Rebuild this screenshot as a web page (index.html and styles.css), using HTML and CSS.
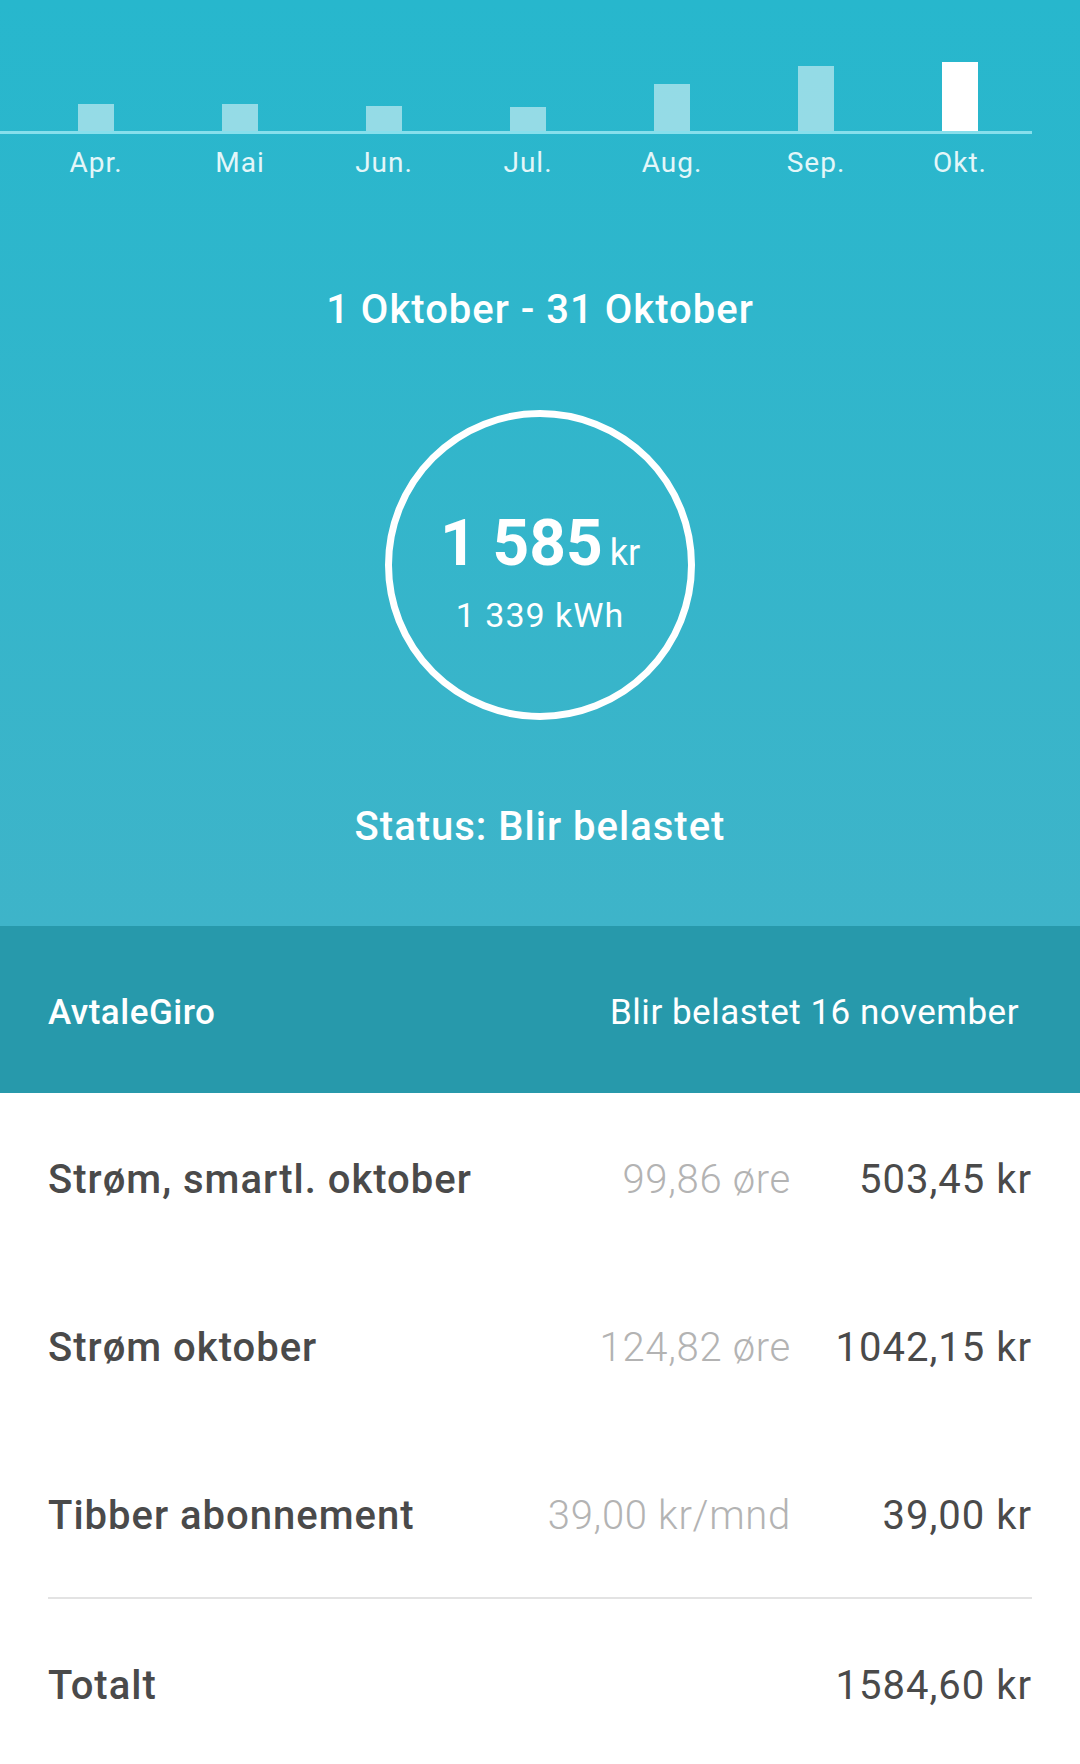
FILE: index.html
```html
<!DOCTYPE html>
<html lang="no">
<head>
    <meta charset="UTF-8">
    <meta name="viewport" content="width=device-width, initial-scale=1.0">
    <title>Faktura oktober</title>
    <link rel="stylesheet" href="styles.css">
</head>
<body>
    <div class="header">
        <div class="chart">
            <div class="month"><div class="bar" style="height: 27px"></div></div>
            <div class="month"><div class="bar" style="height: 27px"></div></div>
            <div class="month"><div class="bar" style="height: 25px"></div></div>
            <div class="month"><div class="bar" style="height: 24px"></div></div>
            <div class="month"><div class="bar" style="height: 47px"></div></div>
            <div class="month"><div class="bar" style="height: 65px"></div></div>
            <div class="month"><div class="bar current" style="height: 69px"></div></div>
        </div>
        <div class="chart-labels">
            <span>Apr.</span>
            <span>Mai</span>
            <span>Jun.</span>
            <span>Jul.</span>
            <span>Aug.</span>
            <span>Sep.</span>
            <span>Okt.</span>
        </div>

        <div class="period">1 Oktober - 31 Oktober</div>

        <div class="circle">
            <div class="amount">1 585<span class="unit">kr</span></div>
            <div class="usage">1 339 kWh</div>
        </div>

        <div class="status">Status: Blir belastet</div>
    </div>

    <div class="band">
        <span class="band-title">AvtaleGiro</span>
        <span>Blir belastet 16 november</span>
    </div>

    <div class="lines">
        <div class="line">
            <span class="line-name">Strøm, smartl. oktober</span>
            <span class="line-price">99,86 øre</span>
            <span class="line-sum">503,45 kr</span>
        </div>
        <div class="line">
            <span class="line-name">Strøm oktober</span>
            <span class="line-price">124,82 øre</span>
            <span class="line-sum">1042,15 kr</span>
        </div>
        <div class="line">
            <span class="line-name">Tibber abonnement</span>
            <span class="line-price">39,00 kr/mnd</span>
            <span class="line-sum">39,00 kr</span>
        </div>
        <div class="divider"></div>
        <div class="line">
            <span class="line-name">Totalt</span>
            <span class="line-price"></span>
            <span class="line-sum">1584,60 kr</span>
        </div>
    </div>
</body>
</html>
```

FILE: styles.css
```css
body {
    margin: 0;
    padding: 0;
    width: 1080px;
    height: 1764px;
    overflow: hidden;
    background: white;
    font-family: Roboto, "Liberation Sans", sans-serif;
}

.header {
    height: 926px;
    background: linear-gradient(to bottom, #27b7cd, #3eb4c9);
    color: white;
    display: flex;
    flex-direction: column;
    align-items: center;
}

/* Månedsgraf */
.chart {
    align-self: flex-start;
    display: flex;
    align-items: flex-end;
    width: 1008px;
    height: 131px;
    padding-left: 24px;
    border-bottom: 3px solid #87dfec;
}

.month {
    width: 144px;
    display: flex;
    justify-content: center;
}

.bar {
    width: 36px;
    background: rgba(255, 255, 255, 0.5);
}

.bar.current {
    background: white;
}

.chart-labels {
    align-self: flex-start;
    display: flex;
    padding-left: 24px;
    margin-top: 13px;
}

.chart-labels span {
    width: 144px;
    text-align: center;
    font-size: 28px;
    line-height: 32px;
    letter-spacing: 1px;
    color: #e4f6f9;
}

.period {
    margin-top: 109px;
    font-size: 40px;
    line-height: 44px;
    font-weight: 500;
    letter-spacing: 1px;
}

.circle {
    margin-top: 78px;
    width: 296px;
    height: 296px;
    border: 7px solid white;
    border-radius: 50%;
    display: flex;
    flex-direction: column;
    align-items: center;
    justify-content: center;
}

.amount {
    margin-top: 13px;
    font-size: 64px;
    line-height: 72px;
    font-weight: 700;
}

.unit {
    font-size: 36px;
    font-weight: 400;
    margin-left: 7px;
}

.usage {
    margin-top: 6px;
    font-size: 34px;
    line-height: 40px;
    letter-spacing: 1px;
}

.status {
    margin-top: 85px;
    font-size: 40px;
    line-height: 44px;
    font-weight: 500;
    letter-spacing: 1px;
}

/* AvtaleGiro */
.band {
    height: 167px;
    box-sizing: border-box;
    background: #2799ab;
    color: white;
    display: flex;
    align-items: center;
    justify-content: space-between;
    padding: 6px 61px 0 48px;
    font-size: 35px;
    letter-spacing: 0.5px;
}

.band-title {
    font-weight: 500;
}

/* Fakturalinjer */
.line {
    height: 168px;
    box-sizing: border-box;
    display: flex;
    align-items: center;
    padding: 4px 48px 0;
    font-size: 40px;
    color: #4a4a4a;
}

.line-name {
    font-weight: 500;
    flex: 1;
    letter-spacing: 1px;
}

.line-price {
    font-weight: 300;
    color: #b3b3b3;
    text-align: right;
    letter-spacing: 0.7px;
}

.line-sum {
    width: 241px;
    text-align: right;
    letter-spacing: 1px;
}

.divider {
    height: 2px;
    margin: 0 48px;
    background: #e3e3e3;
}
```
